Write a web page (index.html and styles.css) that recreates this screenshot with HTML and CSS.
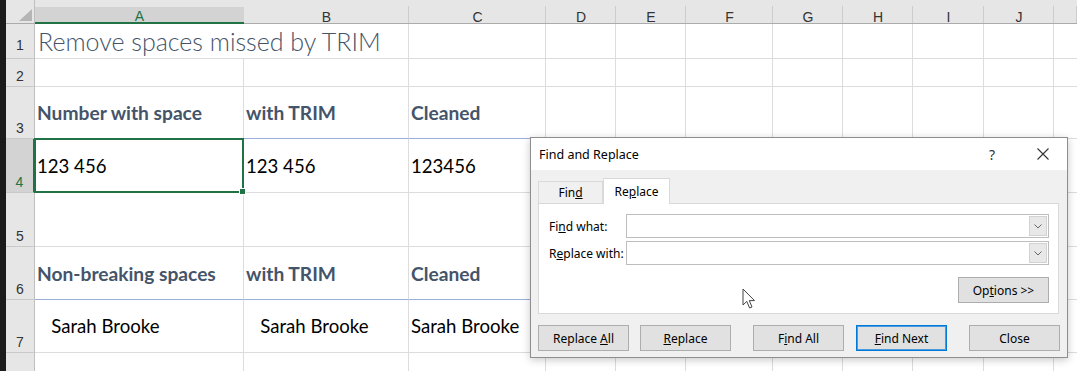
FILE: index.html
```html
<!DOCTYPE html>
<html>
<head>
<meta charset="utf-8">
<link rel="stylesheet" href="styles.css">
</head>
<body>
<div class="app">
  <div class="edge"></div>
  <div class="sheet">
    <div class="corner"><svg width="13" height="12" viewBox="0 0 13 12"><polygon points="0,12 13,12 13,0" fill="#b5b5b5"/></svg></div>
    <div class="ch sel">A</div><div class="ch">B</div><div class="ch">C</div><div class="ch">D</div><div class="ch">E</div><div class="ch">F</div><div class="ch">G</div><div class="ch">H</div><div class="ch">I</div><div class="ch">J</div><div class="ch"></div>

    <div class="rh r1">1</div>
    <div class="c title span2">Remove spaces missed by TRIM</div><div class="c"></div><div class="c"></div><div class="c"></div><div class="c"></div><div class="c"></div><div class="c"></div><div class="c"></div><div class="c"></div><div class="c last"></div>

    <div class="rh">2</div>
    <div class="c"></div><div class="c"></div><div class="c"></div><div class="c"></div><div class="c"></div><div class="c"></div><div class="c"></div><div class="c"></div><div class="c"></div><div class="c"></div><div class="c last"></div>

    <div class="rh">3</div>
    <div class="c hd tb">Number with space</div><div class="c hd tb">with TRIM</div><div class="c hd tb">Cleaned</div><div class="c"></div><div class="c"></div><div class="c"></div><div class="c"></div><div class="c"></div><div class="c"></div><div class="c"></div><div class="c last"></div>

    <div class="rh rsel">4</div>
    <div class="c active">123 456</div><div class="c">123 456</div><div class="c">123456</div><div class="c"></div><div class="c"></div><div class="c"></div><div class="c"></div><div class="c"></div><div class="c"></div><div class="c"></div><div class="c last"></div>

    <div class="rh">5</div>
    <div class="c"></div><div class="c"></div><div class="c"></div><div class="c"></div><div class="c"></div><div class="c"></div><div class="c"></div><div class="c"></div><div class="c"></div><div class="c"></div><div class="c last"></div>

    <div class="rh">6</div>
    <div class="c hd tb">Non-breaking spaces</div><div class="c hd tb">with TRIM</div><div class="c hd tb">Cleaned</div><div class="c"></div><div class="c"></div><div class="c"></div><div class="c"></div><div class="c"></div><div class="c"></div><div class="c"></div><div class="c last"></div>

    <div class="rh">7</div>
    <div class="c">&nbsp;&nbsp;&nbsp;Sarah Brooke</div><div class="c">&nbsp;&nbsp;&nbsp;Sarah Brooke</div><div class="c">Sarah Brooke</div><div class="c"></div><div class="c"></div><div class="c"></div><div class="c"></div><div class="c"></div><div class="c"></div><div class="c"></div><div class="c last"></div>

    <div class="rh"></div>
    <div class="c"></div><div class="c"></div><div class="c"></div><div class="c"></div><div class="c"></div><div class="c"></div><div class="c"></div><div class="c"></div><div class="c"></div><div class="c"></div><div class="c last"></div>
  </div>
</div>

<div class="dlg">
  <div class="dlg-title">
    <span class="dlg-name">Find and Replace</span>
    <span class="help">?</span>
    <svg class="close" width="12" height="12" viewBox="0 0 12 12"><path d="M0.5 0.5 L11.5 11.5 M11.5 0.5 L0.5 11.5" stroke="#333" stroke-width="1.1" fill="none"/></svg>
  </div>
  <div class="tabs">
    <div class="tab">Fin<u>d</u></div>
    <div class="tab on">Re<u>p</u>lace</div>
  </div>
  <div class="panel">
    <div class="frow">
      <label class="lbl">Fi<u>n</u>d what:</label>
      <div class="combo"><div class="drop"><svg width="8" height="5" viewBox="0 0 8 5"><path d="M0.5 0.5 L4 4 L7.5 0.5" stroke="#666" fill="none"/></svg></div></div>
    </div>
    <div class="frow">
      <label class="lbl">R<u>e</u>place with:</label>
      <div class="combo"><div class="drop"><svg width="8" height="5" viewBox="0 0 8 5"><path d="M0.5 0.5 L4 4 L7.5 0.5" stroke="#666" fill="none"/></svg></div></div>
    </div>
    <div class="orow"><div class="btn">Op<u>t</u>ions &gt;&gt;</div></div>
  </div>
  <div class="brow">
    <div class="btn">Replace <u>A</u>ll</div>
    <div class="btn g1"><u>R</u>eplace</div>
    <div class="btn g2">F<u>i</u>nd All</div>
    <div class="btn g1 def"><u>F</u>ind Next</div>
    <div class="btn g2">Close</div>
  </div>
</div>

<svg class="cursor" width="14" height="22" viewBox="0 0 14 22"><path d="M1 1 L1 17 L4.8 13.4 L7.6 20 L10 19 L7.3 12.6 L12.5 12.6 Z" fill="#fff" stroke="#444" stroke-width="1" stroke-linejoin="round"/></svg>
</body>
</html>
```

FILE: styles.css
```css
html, body {
  margin: 0;
  padding: 0;
}
body {
  width: 1077px;
  height: 371px;
  overflow: hidden;
  position: relative;
  background: #fff;
}
.app {
  display: flex;
  height: 371px;
  overflow: hidden;
}
.edge {
  width: 6px;
  flex: none;
  background: #1b1b1b;
}
.sheet {
  flex: 1;
  display: grid;
  grid-template-columns: 29px 209px 165px 137px 70px 70px 87px 70px 70px 71px 70px 1fr;
  grid-template-rows: 24px 35px 28px 52px 54px 54px 53px 53px 45px;
  align-content: start;
}
.sheet > div {
  box-sizing: border-box;
  min-width: 0;
}
.corner {
  background: #e6e6e6;
  border-right: 1px solid #bfbfbf;
  border-bottom: 1px solid #ababab;
  display: flex;
  justify-content: flex-end;
  align-items: flex-end;
  padding: 0 2px 2px 0;
}
.ch {
  background: linear-gradient(#cdcdcd, #cdcdcd) right bottom / 1px 17px no-repeat, #e6e6e6;
  border-bottom: 1px solid #ababab;
  padding-top: 10px;
  display: flex;
  align-items: center;
  justify-content: center;
  font-family: "Liberation Sans", Arial, sans-serif;
  font-size: 14px;
  color: #333;
}
.ch.sel {
  background: linear-gradient(#e6e6e6 7px, #d3d3d3 7px);
  border-bottom: 2px solid #217346;
  color: #217346;
}
.rh {
  background: #e6e6e6;
  border-right: 1px solid #bfbfbf;
  border-bottom: 1px solid #c9c9c9;
  display: flex;
  align-items: flex-end;
  justify-content: center;
  padding-bottom: 2px;
  font-family: "Liberation Sans", Arial, sans-serif;
  font-size: 14px;
  color: #333;
}
.rh.r1 {
  padding-bottom: 5px;
}
.rh.rsel {
  background: #d3d3d3;
  color: #217346;
  border-right: 2px solid #217346;
}
.c {
  border-right: 1px solid #dcdcdc;
  border-bottom: 1px solid #dcdcdc;
  display: flex;
  align-items: center;
  padding-left: 2px;
  white-space: pre;
  font-family: Lato, "Liberation Sans", sans-serif;
  font-size: 18.6px;
  color: #000;
}
.c.last {
  border-right: none;
}
.c.span2 {
  grid-column: span 2;
}
.c.title {
  font-weight: 300;
  font-size: 25px;
  color: #44546a;
  padding-left: 3px;
  padding-bottom: 1px;
}
.c.hd {
  font-weight: 700;
  font-size: 19.2px;
  color: #44546a;
}
.c.tb {
  border-bottom-color: #9bb0d8;
}
.c.active {
  position: relative;
}
.c.active::after {
  content: "";
  position: absolute;
  left: -1px;
  top: -1px;
  right: -1px;
  bottom: -1px;
  border: 2px solid #217346;
}
.c.active::before {
  content: "";
  position: absolute;
  right: -3px;
  bottom: -3px;
  width: 5px;
  height: 5px;
  background: #217346;
  border: 1px solid #fff;
  z-index: 2;
}

/* dialog */
.dlg {
  position: absolute;
  left: 530px;
  top: 137px;
  width: 538px;
  height: 221px;
  box-sizing: border-box;
  border: 1px solid #8e8e8e;
  background: #f0f0f0;
  box-shadow: 0 2px 8px rgba(0, 0, 0, 0.22);
  font-family: "Noto Sans", "Open Sans", sans-serif;
  font-size: 12px;
  color: #000;
}
.dlg-title {
  height: 32px;
  background: #fff;
  display: flex;
  align-items: center;
  padding-left: 8px;
}
.dlg-name {
  font-size: 12.5px;
  flex: 1;
}
.help {
  font-size: 14px;
  color: #333;
  margin-right: 42px;
}
.close {
  margin-right: 18px;
}
.tabs {
  height: 33px;
  display: flex;
  align-items: flex-end;
  padding-left: 7px;
}
.tab {
  box-sizing: border-box;
  width: 65px;
  height: 22px;
  border: 1px solid #d9d9d9;
  border-bottom: none;
  background: #f0f0f0;
  display: flex;
  align-items: center;
  justify-content: center;
}
.tab.on {
  width: 67px;
  height: 26px;
  background: #fff;
  margin-bottom: -1px;
  position: relative;
  z-index: 1;
}
.panel {
  box-sizing: border-box;
  margin-left: 7px;
  width: 521px;
  height: 111px;
  background: #fff;
  border: 1px solid #d9d9d9;
  padding: 10px 9px 0 10px;
  display: flex;
  flex-direction: column;
  gap: 3px;
}
.frow {
  display: flex;
  align-items: center;
}
.lbl {
  width: 77px;
  flex: none;
}
.combo {
  box-sizing: border-box;
  width: 423px;
  height: 24px;
  border: 1px solid #bdbdbd;
  background: #fff;
  display: flex;
  justify-content: flex-end;
  padding: 1px;
}
.drop {
  box-sizing: border-box;
  width: 18px;
  height: 100%;
  background: #e8e8e8;
  border: 1px solid #d2d2d2;
  display: flex;
  align-items: center;
  justify-content: center;
}
.orow {
  display: flex;
  justify-content: flex-end;
  margin-top: 9px;
}
.btn {
  box-sizing: border-box;
  width: 91px;
  height: 26px;
  border: 1px solid #adadad;
  background: #e1e1e1;
  display: flex;
  align-items: center;
  justify-content: center;
  font-size: 12px;
  white-space: pre;
}
.btn.def {
  border: 1px solid #0078d7;
  box-shadow: inset 0 0 0 1px #4c9be0;
}
.brow {
  display: flex;
  margin-top: 11px;
  padding-left: 7px;
}
.btn.g1 {
  margin-left: 11px;
}
.btn.g2 {
  margin-left: 22px;
}
.brow .btn.def {
  margin-left: 12px;
}
.cursor {
  position: absolute;
  left: 742px;
  top: 288px;
}
```
